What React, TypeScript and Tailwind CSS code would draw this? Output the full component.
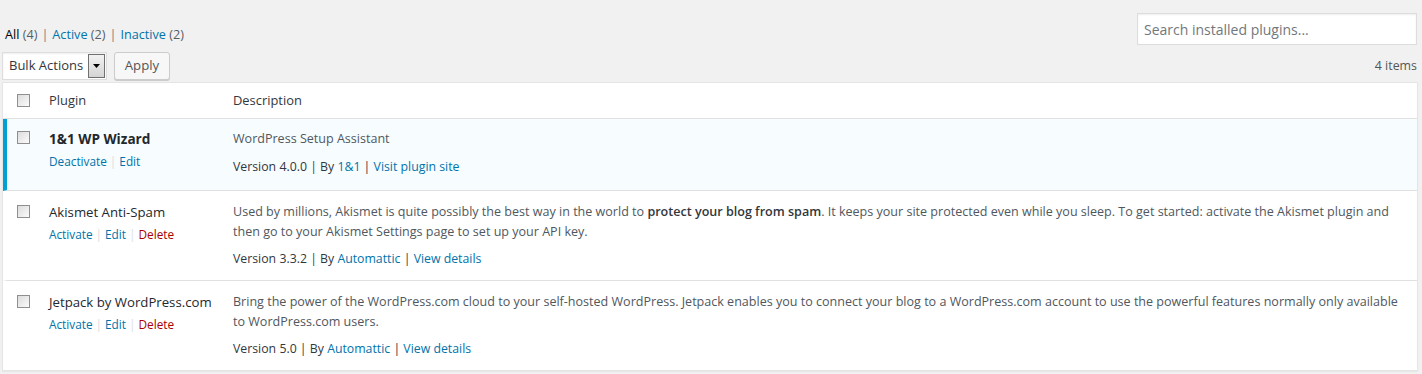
import React from "react";

const font = { fontFamily: '"Open Sans", "Noto Sans", Arial, sans-serif' };

function Checkbox() {
  return (
    <span className="block w-[13px] h-[13px] border border-[#8f8f8f] bg-gradient-to-br from-[#dcdcdc] to-[#fbfbfb]" />
  );
}

function Sep() {
  return <span className="text-[#72777c] px-[4px]">|</span>;
}

type Row = {
  name: string;
  bold?: boolean;
  active?: boolean;
  actions: { label: string; color: string }[];
  desc: React.ReactNode;
  version: string;
  author: string;
  last: string;
};

const rows: Row[] = [
  {
    name: "1&1 WP Wizard",
    bold: true,
    active: true,
    actions: [
      { label: "Deactivate", color: "text-[#0073aa]" },
      { label: "Edit", color: "text-[#0073aa]" },
    ],
    desc: <>WordPress Setup Assistant</>,
    version: "4.0.0",
    author: "1&1",
    last: "Visit plugin site",
  },
  {
    name: "Akismet Anti-Spam",
    actions: [
      { label: "Activate", color: "text-[#0073aa]" },
      { label: "Edit", color: "text-[#0073aa]" },
      { label: "Delete", color: "text-[#a00]" },
    ],
    desc: (
      <>
        Used by millions, Akismet is quite possibly the best way in the world to{" "}
        <strong className="font-semibold text-[#32373c]">protect your blog from spam</strong>. It keeps your site
        protected even while you sleep. To get started: activate the Akismet plugin and then go to your Akismet
        Settings page to set up your API key.
      </>
    ),
    version: "3.3.2",
    author: "Automattic",
    last: "View details",
  },
  {
    name: "Jetpack by WordPress.com",
    actions: [
      { label: "Activate", color: "text-[#0073aa]" },
      { label: "Edit", color: "text-[#0073aa]" },
      { label: "Delete", color: "text-[#a00]" },
    ],
    desc: (
      <>
        Bring the power of the WordPress.com cloud to your self-hosted WordPress. Jetpack enables you to connect
        your blog to a WordPress.com account to use the powerful features normally only available to WordPress.com
        users.
      </>
    ),
    version: "5.0",
    author: "Automattic",
    last: "View details",
  },
];

export default function App() {
  return (
    <div className="w-[1422px] h-[374px] bg-[#f1f1f1] text-[13px] text-[#444] overflow-hidden" style={font}>
      <div className="flex justify-between items-start pl-[5px] pr-[5px]">
        <div className="pt-[24px] leading-[20px] text-[12.65px] whitespace-nowrap">
          <span className="text-black">All</span> <span className="text-[#555d66]">(4)</span>
          <Sep />
          <span className="text-[#0073aa]">Active</span> <span className="text-[#555d66]">(2)</span>
          <Sep />
          <span className="text-[#0073aa]">Inactive</span> <span className="text-[#555d66]">(2)</span>
        </div>
        <div className="pt-[13px]">
          <div className="w-[280px] h-[32px] border border-[#ddd] bg-white shadow-[inset_0_1px_2px_rgba(0,0,0,0.07)] px-[6px] flex items-center text-[14px] text-[#72777c] whitespace-nowrap">
            Search installed plugins...
          </div>
        </div>
      </div>

      <div className="flex items-center justify-between pl-[2px] pr-[5px] mt-[7px]">
        <div className="flex items-center gap-[7px]">
          <div className="h-[28px] w-[105px] border border-[#ddd] bg-white flex items-center justify-between pl-[6px] pr-[1px] text-[13px] text-[#32373c] shadow-[inset_0_1px_2px_rgba(0,0,0,0.07)] whitespace-nowrap">
            <span>Bulk Actions</span>
            <span className="w-[17px] h-[24px] border border-[#707070] bg-gradient-to-b from-[#f2f2f2] to-[#d4d4d4] flex items-center justify-center">
              <svg width="7" height="4" viewBox="0 0 7 4">
                <path d="M0 0H7L3.5 4Z" fill="#000" />
              </svg>
            </span>
          </div>
          <button className="h-[28px] w-[56px] border border-[#ccc] rounded-[3px] bg-[#f7f7f7] text-[13.2px] text-[#555] shadow-[0_1px_0_#ccc]">
            Apply
          </button>
        </div>
        <div className="text-[12.4px] text-[#555]">4 items</div>
      </div>

      <div className="ml-[2px] mr-[4px] mt-[2px] border border-[#e5e5e5] bg-white shadow-[0_1px_1px_rgba(0,0,0,0.04)]">
        <div className="flex h-[36px] items-center border-b border-[#e1e1e1] text-[#32373c] text-[12.9px]">
          <div className="w-[37px] pl-[14px] flex items-center">
            <Checkbox />
          </div>
          <div className="w-[184px] pl-[9px]">Plugin</div>
          <div className="pl-[9px]">Description</div>
        </div>
        {rows.map((r, i) => (
          <div
            key={i}
            className={`flex ${i < rows.length - 1 ? "border-b border-[#e1e1e1]" : ""} ${
              r.active ? "bg-[#f7fcfe] border-l-4 border-l-[#00a0d2]" : "border-l-4 border-l-transparent"
            }`}
          >
            <div className={`w-[33px] pl-[10px] ${i === 0 ? "pt-[12px]" : "pt-[14px]"}`}>
              <Checkbox />
            </div>
            <div className={`w-[184px] pl-[9px] ${i === 0 ? "pt-[10px]" : "pt-[10.5px]"}`}>
              <div
                className={`leading-[20px] text-[#23282d] whitespace-nowrap ${
                  r.bold ? "font-bold text-[13.6px]" : "text-[13.2px]"
                }`}
              >
                {r.name}
              </div>
              <div className="mt-[2px] leading-[20px] text-[11.8px] whitespace-nowrap">
                {r.actions.map((a, j) => (
                  <span key={j}>
                    {j > 0 && <span className="text-[#ddd] px-[3px]">|</span>}
                    <span className={a.color}>{a.label}</span>
                  </span>
                ))}
              </div>
            </div>
            <div
              className={`flex-1 pl-[9px] pr-[10px] ${i === 0 ? "pt-[10px] pb-[14px]" : "pt-[10.5px] pb-[11.5px]"}`}
            >
              <p className="leading-[19.75px] text-[12.55px] text-[#50575e]">{r.desc}</p>
              <p className="mt-[8px] leading-[19.5px] text-[12.3px] text-[#32373c]">
                Version {r.version} | By <span className="text-[#0073aa]">{r.author}</span> |{" "}
                <span className="text-[#0073aa]">{r.last}</span>
              </p>
            </div>
          </div>
        ))}
      </div>
    </div>
  );
}
